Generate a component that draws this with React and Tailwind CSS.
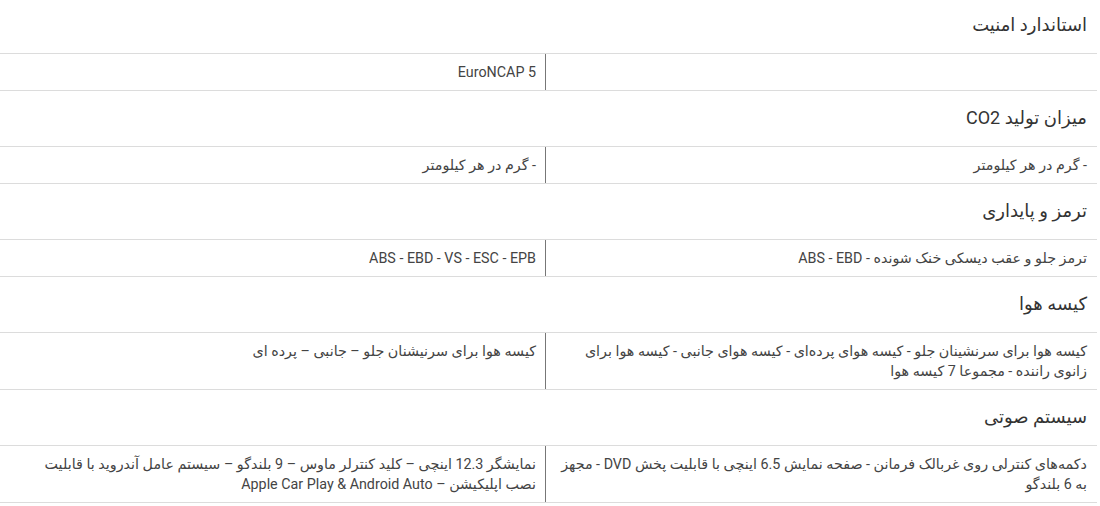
import React from "react";

const sections = [
  { title: "استاندارد امنیت", right: "", left: "EuroNCAP 5", first: true },
  { title: "میزان تولید CO2", right: "- گرم در هر کیلومتر", left: "- گرم در هر کیلومتر" },
  { title: "ترمز و پایداری", right: "ترمز جلو و عقب دیسکی خنک شونده - ABS - EBD", left: "ABS - EBD - VS - ESC - EPB" },
  {
    title: "کیسه هوا",
    right: "کیسه هوا برای سرنشینان جلو - کیسه هوای پرده‌ای - کیسه هوای جانبی - کیسه هوا برای زانوی راننده - مجموعا 7 کیسه هوا",
    left: "کیسه هوا برای سرنیشنان جلو – جانبی – پرده ای",
  },
  {
    title: "سیستم صوتی",
    right: "دکمه‌های کنترلی روی غربالک فرمانن - صفحه نمایش 6.5 اینچی با قابلیت پخش DVD - مجهز به 6 بلندگو",
    left: "نمایشگر 12.3 اینچی – کلید کنترلر ماوس – 9 بلندگو – سیستم عامل آندروید با قابلیت نصب اپلیکیشن – Apple Car Play & Android Auto",
  },
];

export default function App() {
  return (
    <div
      dir="rtl"
      className="w-[1097px] bg-white text-[#444] overflow-hidden h-[506px]"
      style={{ fontFamily: "Roboto, 'DejaVu Sans', sans-serif" }}
    >
      <div className="-mt-[2px]">
        {sections.map((s, i) => (
          <div key={i}>
            <div className="h-[56px] border-b border-[#dcdcdc] flex items-center pr-[10px] pb-[2px] text-[18px] text-[#333]">
              {s.title}
            </div>
            <div className="flex border-b border-[#dcdcdc] text-[14.3px] leading-[20px]">
              <div className="w-[551px] shrink-0 py-[8px] pr-[10px] pl-[12px]">{s.right || "\u00a0"}</div>
              <div className="flex-1 border-r border-[#777] py-[8px] pr-[9px] pl-[12px]">{s.left}</div>
            </div>
          </div>
        ))}
      </div>
    </div>
  );
}
